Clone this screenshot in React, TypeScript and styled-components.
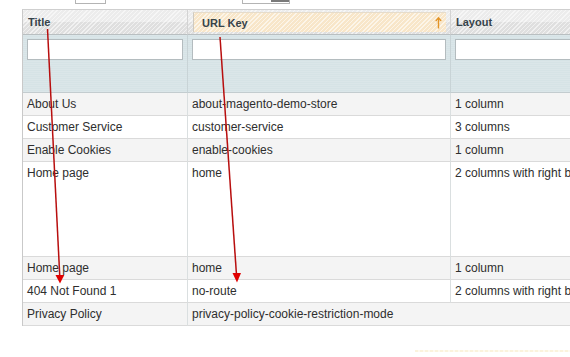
import React from "react";
import styled, { createGlobalStyle } from "styled-components";

const Global = createGlobalStyle`
  html, body { margin: 0; padding: 0; background: #ffffff; }
  body { font-family: "Liberation Sans", Arial, sans-serif; }
`;

const Page = styled.div`
  position: relative;
  width: 570px;
  height: 357px;
  overflow: hidden;
  background: #fff;
`;

const TopBar = styled.div`
  height: 9px;
  display: flex;
  align-items: flex-start;
`;

const PagerBox = styled.div<{ $left: number; $width: number }>`
  margin-left: ${(p) => p.$left}px;
  width: ${(p) => p.$width}px;
  height: 4px;
  box-sizing: border-box;
  background: #fff;
  border: 1px solid #b4b4b4;
  border-top: none;
  display: flex;
  justify-content: flex-end;
`;

const PagerKnob = styled.div`
  width: 18px;
  height: 2px;
  background: #7a7a7a;
`;

const Table = styled.table`
  margin-left: 22px;
  border-collapse: separate;
  border-spacing: 0;
  table-layout: fixed;
  width: 760px;
  border-left: 1px solid #c9c9c9;
  border-top: 1px solid #cfcfcf;
  font-size: 12px;
  color: #2e2e2e;
`;

const HeadCell = styled.th<{ $sorted?: boolean }>`
  box-sizing: border-box;
  height: 25px;
  padding: ${(p) => (p.$sorted ? "2px 4px 2px 5px" : "0 4px 0 5px")};
  text-align: left;
  font-size: 11px;
  font-weight: bold;
  color: #36434a;
  border-right: 1px solid #d3d3d3;
  border-bottom: 1px solid #b9bfc1;
  background:
    repeating-linear-gradient(135deg, rgba(255,255,255,0.55) 0 1px, transparent 1px 3px),
    linear-gradient(#ececec 0 50%, #dfdfdf 50% 100%);
  vertical-align: middle;
`;

const SortBox = styled.div`
  box-sizing: border-box;
  height: 20px;
  display: flex;
  align-items: center;
  justify-content: space-between;
  padding: 0 4px 0 8px;
  border-left: 1px solid #cfcac0;
  border-top: 1px solid #e6dccb;
  background:
    repeating-linear-gradient(135deg, rgba(255,255,255,0.6) 0 1px, transparent 1px 3px),
    #f8e6c9;
`;

const FilterCell = styled.td`
  box-sizing: border-box;
  height: 58px;
  padding: 4px 4px 0 4px;
  vertical-align: top;
  border-right: 1px solid #c8d3d6;
  border-bottom: 1px solid #c3cccf;
  background:
    repeating-linear-gradient(0deg, rgba(255,255,255,0.12) 0 1px, transparent 1px 2px),
    #d6e3e6;
`;

const FilterInput = styled.input`
  display: block;
  box-sizing: border-box;
  width: 100%;
  height: 21px;
  margin: 0;
  border: 1px solid #b4bcbf;
  background: #fff;
  padding: 0 3px;
`;

const Row = styled.tr<{ $odd: boolean }>`
  background: ${(p) => (p.$odd ? "#f4f4f4" : "#ffffff")};
`;

const Cell = styled.td<{ $tall?: boolean }>`
  box-sizing: border-box;
  height: ${(p) => (p.$tall ? 95 : 23)}px;
  padding: ${(p) => (p.$tall ? "4px 4px 0 4px" : "0 4px")};
  vertical-align: ${(p) => (p.$tall ? "top" : "middle")};
  white-space: nowrap;
  overflow: hidden;
  border-right: 1px solid #dadfe0;
  border-bottom: 1px solid #dadada;
  line-height: 15px;
`;

const Footer = styled.div`
  margin: 24px 0 0 415px;
  height: 2px;
  background: repeating-linear-gradient(90deg, #fbf3dc 0 3px, #fffaf0 3px 5px);
`;

const Overlay = styled.svg`
  position: absolute;
  left: 0;
  top: 0;
  pointer-events: none;
`;

const SortArrow = () => (
  <svg width="7" height="12" viewBox="0 0 7 12">
    <path d="M3.5 1 L3.5 11.5" stroke="#e39326" strokeWidth="1.4" />
    <path d="M0.8 4 L3.5 0.8 L6.2 4" stroke="#e39326" strokeWidth="1.3" fill="none" />
  </svg>
);

type Page = { title: string; key: string; layout?: string; tall?: boolean };

const pages: Page[] = [
  { title: "About Us", key: "about-magento-demo-store", layout: "1 column" },
  { title: "Customer Service", key: "customer-service", layout: "3 columns" },
  { title: "Enable Cookies", key: "enable-cookies", layout: "1 column" },
  { title: "Home page", key: "home", layout: "2 columns with right bar", tall: true },
  { title: "Home page", key: "home", layout: "1 column" },
  { title: "404 Not Found 1", key: "no-route", layout: "2 columns with right bar" },
  { title: "Privacy Policy", key: "privacy-policy-cookie-restriction-mode" },
];

export default function App() {
  return (
    <Page>
      <Global />
      <TopBar>
        <PagerBox $left={75} $width={31} />
        <PagerBox $left={136} $width={48}>
          <PagerKnob />
        </PagerBox>
      </TopBar>
      <Table>
        <colgroup>
          <col style={{ width: 165 }} />
          <col style={{ width: 263 }} />
          <col />
        </colgroup>
        <thead>
          <tr>
            <HeadCell>Title</HeadCell>
            <HeadCell $sorted>
              <SortBox>
                <span>URL Key</span>
                <SortArrow />
              </SortBox>
            </HeadCell>
            <HeadCell>Layout</HeadCell>
          </tr>
          <tr>
            <FilterCell><FilterInput readOnly /></FilterCell>
            <FilterCell><FilterInput readOnly /></FilterCell>
            <FilterCell><FilterInput readOnly /></FilterCell>
          </tr>
        </thead>
        <tbody>
          {pages.map((p, i) => (
            <Row key={i} $odd={i % 2 === 0}>
              <Cell $tall={p.tall}>{p.title}</Cell>
              {p.layout ? (
                <>
                  <Cell $tall={p.tall}>{p.key}</Cell>
                  <Cell $tall={p.tall}>{p.layout}</Cell>
                </>
              ) : (
                <Cell colSpan={2}>{p.key}</Cell>
              )}
            </Row>
          ))}
        </tbody>
      </Table>
      <Footer />
      <Overlay width="570" height="357" viewBox="0 0 570 357">
        <line x1="47.5" y1="29" x2="59.8" y2="277" stroke="#b80e0e" strokeWidth="1.5" />
        <polygon points="55.5,275 64.3,275 60,283.5" fill="#e00000" />
        <line x1="220" y1="37" x2="236.5" y2="275" stroke="#b80e0e" strokeWidth="1.5" />
        <polygon points="232.5,273 241,273 237,282.5" fill="#e00000" />
      </Overlay>
    </Page>
  );
}
